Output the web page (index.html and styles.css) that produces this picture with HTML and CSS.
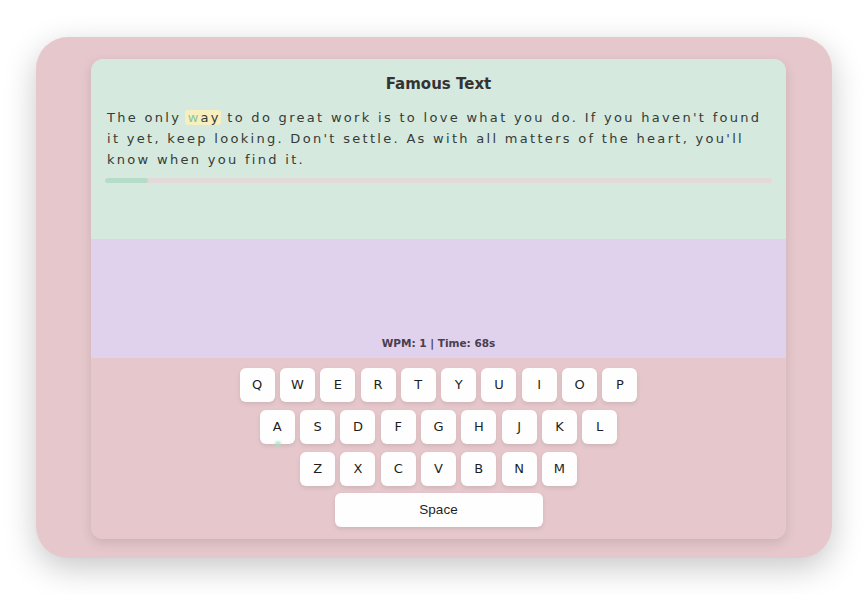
FILE: index.html
```html
<!DOCTYPE html>
<html>
<head>
<meta charset="utf-8">
<link rel="stylesheet" href="styles.css">
</head>
<body>
<div class="frame">
  <div class="card">
    <section class="text-panel">
      <h1 class="title">Famous Text</h1>
      <p class="quote">The only <span class="current"><span class="typed">w</span>ay</span> to do great work is to love what you do. If you haven't found it yet, keep looking. Don't settle. As with all matters of the heart, you'll know when you find it.</p>
      <div class="progress"><div class="progress-fill" style="width:6.5%"></div></div>
    </section>
    <section class="stats-panel">
      <div class="stats">WPM: 1 | Time: 68s</div>
    </section>
    <section class="keyboard">
      <div class="row">
        <div class="key">Q</div><div class="key">W</div><div class="key">E</div><div class="key">R</div><div class="key">T</div><div class="key">Y</div><div class="key">U</div><div class="key">I</div><div class="key">O</div><div class="key">P</div>
      </div>
      <div class="row">
        <div class="key key-home">A<span class="dot"></span></div><div class="key">S</div><div class="key">D</div><div class="key">F</div><div class="key">G</div><div class="key">H</div><div class="key">J</div><div class="key">K</div><div class="key">L</div>
      </div>
      <div class="row">
        <div class="key">Z</div><div class="key">X</div><div class="key">C</div><div class="key">V</div><div class="key">B</div><div class="key">N</div><div class="key">M</div>
      </div>
      <div class="row">
        <div class="key key-space">Space</div>
      </div>
    </section>
  </div>
</div>
</body>
</html>
```
FILE: styles.css
```css
html, body {
  margin: 0;
  padding: 0;
  background: #ffffff;
}
body {
  width: 868px;
  height: 594px;
  display: flex;
  align-items: center;
  justify-content: center;
  font-family: "DejaVu Sans", Verdana, sans-serif;
}
.frame {
  width: 796px;
  height: 521px;
  box-sizing: border-box;
  padding: 22px 46px 19px 55px;
  background: #e6c8cc;
  border-radius: 32px;
  box-shadow: 0 10px 32px rgba(0, 0, 0, 0.22);
}
.card {
  width: 695px;
  height: 480px;
  border-radius: 12px;
  overflow: hidden;
  display: flex;
  flex-direction: column;
  box-shadow: 0 4px 12px rgba(0, 0, 0, 0.12);
  background: #e6c8cc;
}
.text-panel {
  height: 180px;
  box-sizing: border-box;
  background: #d6e9de;
  padding: 15px 14px 0 14px;
}
.title {
  margin: 0;
  text-align: center;
  font-size: 15px;
  line-height: 20px;
  font-weight: bold;
  color: #333333;
}
.quote {
  margin: 13px 0 0 0;
  padding: 0 2px;
  font-size: 13px;
  line-height: 21px;
  letter-spacing: 2.3px;
  color: #353b37;
}
.current {
  background: #f8efbf;
  border-radius: 3px;
  box-shadow: -3px 0 0 #f8efbf;
}
.typed {
  color: #8cc49c;
}
.progress {
  margin-top: 8px;
  height: 5px;
  border-radius: 3px;
  background: #e3d9da;
  overflow: hidden;
}
.progress-fill {
  height: 100%;
  background: #b5dcc7;
  border-radius: 3px;
}
.stats-panel {
  height: 119px;
  box-sizing: border-box;
  background: #e0d1ec;
  display: flex;
  align-items: flex-end;
  justify-content: center;
  padding-bottom: 8px;
}
.stats {
  font-size: 10.5px;
  line-height: 13px;
  font-weight: bold;
  color: #4a3e4f;
}
.keyboard {
  flex: 1;
  background: #e6c8cc;
  display: flex;
  flex-direction: column;
  align-items: center;
  gap: 8px;
  padding-top: 10px;
}
.row {
  display: flex;
  gap: 5.3px;
  justify-content: center;
}
.key {
  position: relative;
  width: 35px;
  height: 34px;
  background: #fefefe;
  border-radius: 6px;
  box-shadow: 0 2px 4px rgba(0, 0, 0, 0.1);
  display: flex;
  align-items: center;
  justify-content: center;
  font-size: 13px;
  color: #1e1e1e;
}
.key-space {
  width: 208px;
  margin-top: -1px;
  font-family: "Liberation Sans", Arial, sans-serif;
  font-size: 13.5px;
}
.dot {
  position: absolute;
  left: 15px;
  bottom: -3px;
  width: 6px;
  height: 6px;
  border-radius: 50%;
  background: rgba(170, 222, 196, 0.8);
  filter: blur(1px);
}
```
